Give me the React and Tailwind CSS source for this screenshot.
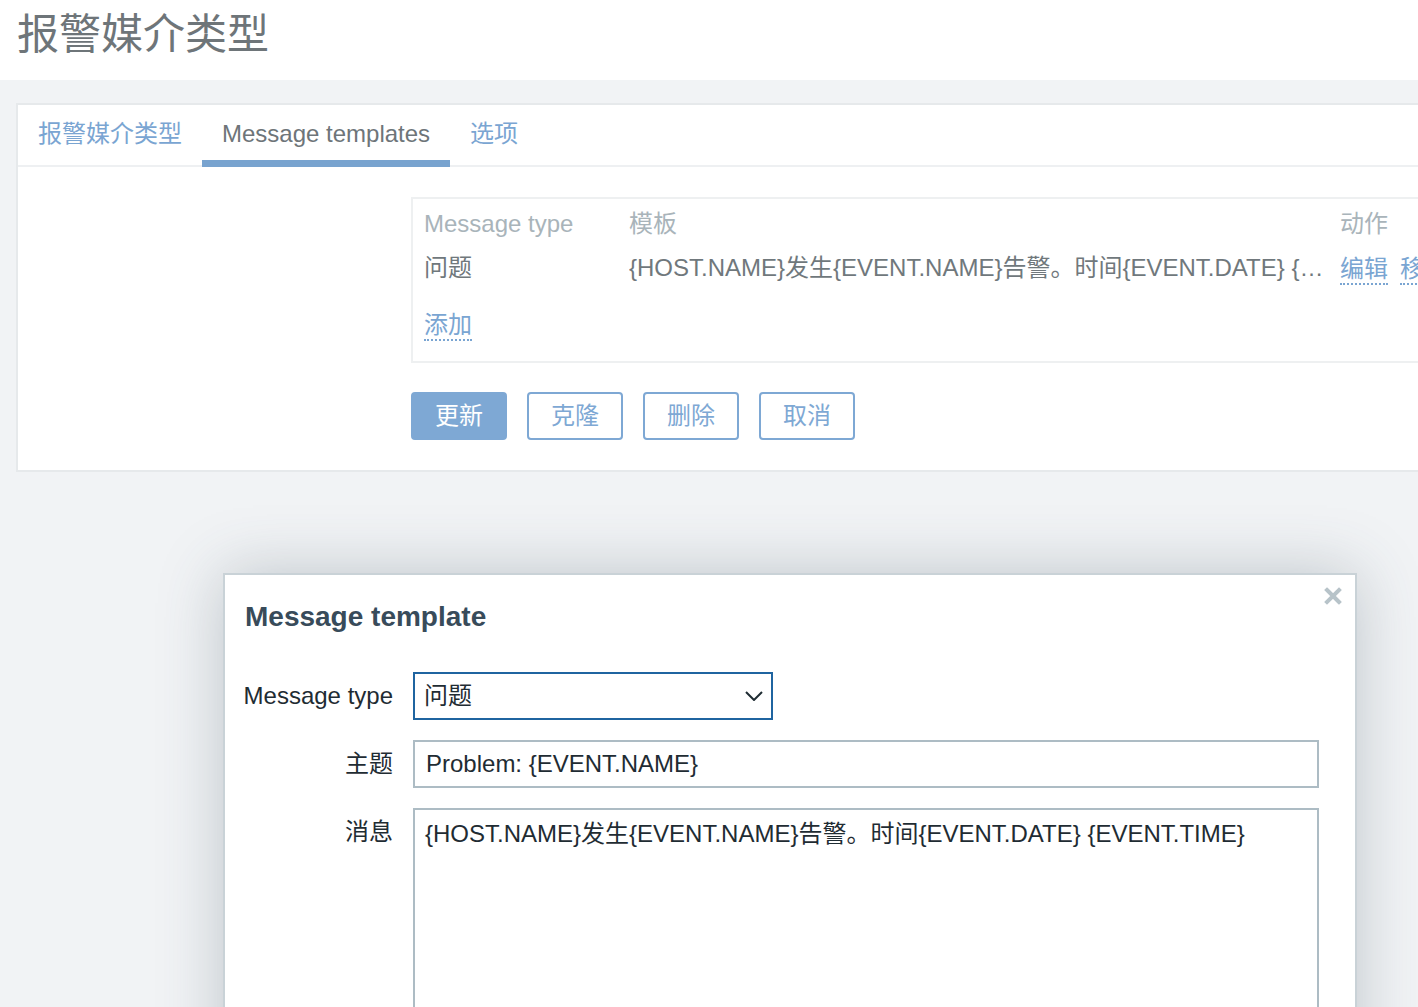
import React from "react";

const font = { fontFamily: "'Liberation Sans', 'Noto Sans CJK SC', Arial, sans-serif" };

function DotLink({ children, className = "" }) {
  return (
    <span className={"inline-block leading-[28px] text-[#7aa5d2] border-b-2 border-dotted border-[#7aa5d2] " + className}>
      {children}
    </span>
  );
}

export default function App() {
  return (
    <div
      className="relative w-[1418px] h-[1007px] overflow-hidden bg-[#f1f3f5] text-[24px]"
      style={font}
    >
      {/* header */}
      <div className="h-[80px] bg-white flex items-center px-[17px]">
        <h1 className="text-[42px] leading-[50px] text-[#6e7579] font-normal -mt-[10px]">报警媒介类型</h1>
      </div>

      {/* main card */}
      <div className="pt-[23px] pl-[16px]">
        <div className="w-[1500px] bg-white border-2 border-[#e6e9eb] h-[369px]">
          {/* tabs */}
          <div className="h-[62px] flex border-b-2 border-[#eef0f2]">
            <div className="px-5 flex items-center text-[#7aa5d2] pb-[2px]">报警媒介类型</div>
            <div className="relative px-5 flex items-center text-[#6e7579] pb-[2px]">
              Message templates
              <div className="absolute left-0 right-0 -bottom-[2px] h-[7px] bg-[#78a3cf]" />
            </div>
            <div className="px-5 flex items-center text-[#7aa5d2] pb-[2px]">选项</div>
          </div>

          {/* content */}
          <div className="pl-[393px] pt-[30px]">
            <div className="w-[1100px] border-2 border-[#eef0f1] pl-[11px] pt-[3px] pb-[15px]">
              <div className="flex h-[44px] items-center text-[#a9b4ba]">
                <div className="w-[205px]">Message type</div>
                <div className="w-[711px]">模板</div>
                <div>动作</div>
              </div>
              <div className="flex h-[44px] items-center text-[#70787c]">
                <div className="w-[205px]">问题</div>
                <div className="w-[711px] pr-[12px]">
                  <div className="truncate">{"{HOST.NAME}发生{EVENT.NAME}告警。时间{EVENT.DATE} {EVENT.TIME}"}</div>
                </div>
                <div className="flex gap-[12px] pt-[4px]">
                  <DotLink>编辑</DotLink>
                  <DotLink>移除</DotLink>
                </div>
              </div>
              <div className="flex h-[44px] items-center mt-[12px]">
                <DotLink className="mt-[4px]">添加</DotLink>
              </div>
            </div>

            <div className="flex gap-[20px] mt-[29px]">
              <button className="w-[96px] h-[48px] rounded-[4px] border-2 border-[#7ea8d4] bg-[#7ea8d4] text-white text-[24px]">更新</button>
              <button className="w-[96px] h-[48px] rounded-[4px] border-2 border-[#7ea8d4] bg-white text-[#7ea8d4] text-[24px]">克隆</button>
              <button className="w-[96px] h-[48px] rounded-[4px] border-2 border-[#7ea8d4] bg-white text-[#7ea8d4] text-[24px]">删除</button>
              <button className="w-[96px] h-[48px] rounded-[4px] border-2 border-[#7ea8d4] bg-white text-[#7ea8d4] text-[24px]">取消</button>
            </div>
          </div>
        </div>
      </div>

      {/* dialog */}
      <div className="absolute left-[223px] top-[573px] w-[1134px] h-[520px] bg-white border-2 border-[#c9d2d7] shadow-[0_0_60px_rgba(60,80,95,0.28)]">
        <button className="absolute right-[13px] top-[12px] w-[18px] h-[18px] flex items-center justify-center">
          <svg width="18" height="18" viewBox="0 0 18 18">
            <path d="M3 3 L15 15 M15 3 L3 15" stroke="#b7c3c9" strokeWidth="4" strokeLinecap="square" />
          </svg>
        </button>
        <div className="pl-[20px] pt-[25px]">
          <h2 className="text-[28px] leading-[34px] font-bold text-[#384b5a]">Message template</h2>
        </div>
        <div className="pl-[20px] pt-[38px] grid grid-cols-[148px_auto] gap-x-[20px] gap-y-[20px] text-[#1f2c33] items-start justify-start">
          <div className="h-[48px] flex items-center justify-end whitespace-nowrap">Message type</div>
          <div className="w-[360px] h-[48px] border-2 border-[#1f64a0] flex items-center justify-between pl-[9px] pr-[8px]">
            <span>问题</span>
            <svg width="18" height="10" viewBox="0 0 18 10">
              <path d="M1 1 L9 9 L17 1" fill="none" stroke="#1f2c33" strokeWidth="2" />
            </svg>
          </div>

          <div className="h-[48px] flex items-center justify-end">主题</div>
          <div className="w-[906px] h-[48px] border-2 border-[#adbcc4] flex items-center pl-[11px]">
            {"Problem: {EVENT.NAME}"}
          </div>

          <div className="h-[48px] flex items-center justify-end">消息</div>
          <div className="w-[906px] h-[300px] border-2 border-[#adbcc4] pl-[10px] pt-[10px] leading-[28px]">
            {"{HOST.NAME}发生{EVENT.NAME}告警。时间{EVENT.DATE} {EVENT.TIME}"}
          </div>
        </div>
      </div>
    </div>
  );
}
